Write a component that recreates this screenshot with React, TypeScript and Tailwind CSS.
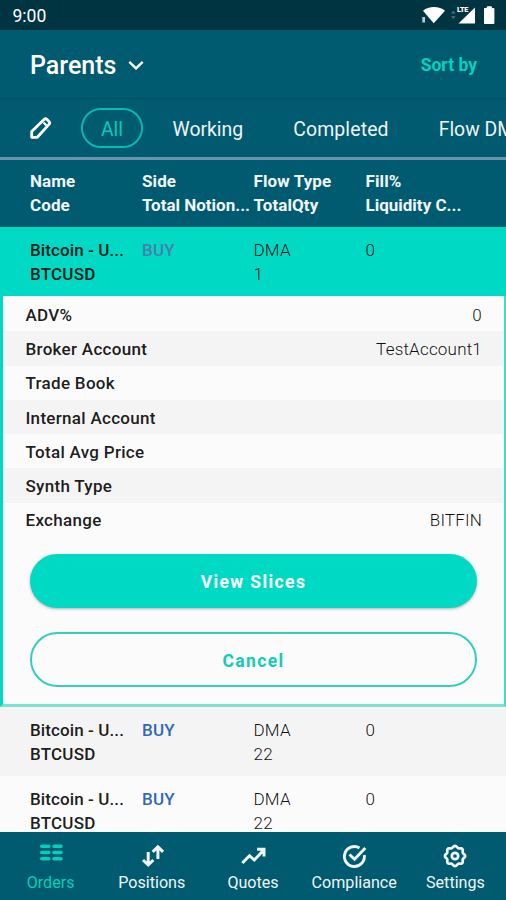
import React from "react";

type Order = { qty: string; tone: string; side: string };

const details: [string, string][] = [
  ["ADV%", "0"],
  ["Broker Account", "TestAccount1"],
  ["Trade Book", ""],
  ["Internal Account", ""],
  ["Total Avg Price", ""],
  ["Synth Type", ""],
  ["Exchange", "BITFIN"],
];

const COLUMNS = "grid grid-cols-[112px_111.5px_112px_112px] pl-[30px]";

// Outline of an eight-lobed cog centred in the 26px icon box.
const cogOutline = Array.from({ length: 96 }, (_, i) => {
  const a = (i / 96) * Math.PI * 2;
  const r = 9.3 + 0.85 * Math.cos(8 * a);
  return `${(13 + r * Math.cos(a)).toFixed(2)},${(13 + r * Math.sin(a)).toFixed(2)}`;
}).join(" ");

function StatusIcons() {
  return (
    <svg width="78" height="20" viewBox="0 0 78 20" fill="#fff">
      <path d="M2 5.8C7.500 .8 18.500 .8 24 5.800L12.700 18.200Z" />
      <path d="M.8 11.500h3.800v6.500H.8z" fill="#b9c8cd" stroke="#003440" strokeWidth="1" />
      <path d="M30 8.500l2.300-2.800 2.300 2.800zM30 11.300l2.300 2.800 2.300-2.800z" fill="#4d7682" />
      <path d="M54 2.500V18.500H37.500Z" />
      <text x="36" y="7.300" fontSize="7.200" fontWeight="900" letterSpacing="-.2" stroke="#003440" strokeWidth="1.2" paintOrder="stroke">LTE</text>
      <path d="M63.500 3.500h2.700V1.800h4.200v1.700h2.500v15h-9.400z" stroke="#fff" strokeLinejoin="round" />
    </svg>
  );
}

function OrderRow({ qty, tone, side }: Order) {
  return (
    <div className={`${COLUMNS} h-[69px] shrink-0 pt-[11px] text-[17px] leading-[24px] ${tone}`}>
      <div className="font-medium text-black/90">
        <div className="tracking-[0.1px]">Bitcoin - U...</div>
        <div className="tracking-[0.2px]">BTCUSD</div>
      </div>
      <div className={`font-medium tracking-[0.2px] ${side}`}>BUY</div>
      <div className="font-light tracking-[0.2px] text-black/95">
        <div>DMA</div>
        <div>{qty}</div>
      </div>
      <div className="font-light text-black/95">0</div>
    </div>
  );
}

function NavItem({ label, active, children }: { label: string; active?: boolean; children: React.ReactNode }) {
  return (
    <div className={`flex flex-1 flex-col items-center pt-[11px] ${active ? "text-[#04cfbb]" : "text-[#f0f6f8]"}`}>
      <svg width="26" height="26" viewBox="0 0 26 26" fill="none" stroke="currentColor" strokeWidth="2.5">
        {children}
      </svg>
      <span className="mt-[3px] text-[16.1px] leading-[22px] whitespace-nowrap">{label}</span>
    </div>
  );
}

export default function App() {
  return (
    <div className="flex h-[900px] w-[506px] flex-col overflow-hidden bg-[#fbfbfb] font-['Roboto',sans-serif]">
      <div className="flex h-[30px] shrink-0 items-center justify-between bg-[#003440] pr-[7px] pl-[12.5px] text-white">
        <span className="pt-[2px] text-[17.5px]">9:00</span>
        <StatusIcons />
      </div>

      <div className="flex h-[68px] shrink-0 items-center justify-between bg-[#005a70] pr-[29px] pl-[30px]">
        <div className="flex items-center gap-[12px] pt-[3px] text-white">
          <span className="text-[25px] leading-[30px] font-medium">Parents</span>
          <svg width="16" height="12" viewBox="0 0 16 12" fill="none" stroke="#fff" strokeWidth="2.3">
            <path d="M1.300 1.800 8 8.300l6.700-6.500" />
          </svg>
        </div>
        <span className="pt-[3px] text-[17.5px] font-bold text-[#04d2be]">Sort by</span>
      </div>

      <div className="flex h-[62px] shrink-0 items-center border-t border-b-[3px] border-t-[#005166] border-b-[#6b91ab] bg-[#005a70] pl-[30px] text-[19.4px] whitespace-nowrap text-[#eef5f8]">
        <svg className="shrink-0" width="22" height="22" viewBox="0 0 22 22" fill="none" stroke="#fff" strokeWidth="2.8" strokeLinejoin="round">
          <path d="M1.700 20.300V14.500L14 2.400q1.500-1.400 3 0l2 2q1.500 1.500 0 3L7.300 20.300Z" />
          <path d="m13.500 5.500 3.200 3.200" strokeWidth="2.200" />
        </svg>
        <div className="ml-[29px] flex h-[40px] w-[62px] shrink-0 items-center justify-center rounded-full border-2 border-[#08b9ad] pt-[3px] text-[#07cbb9]">All</div>
        <span className="ml-[29.5px] pt-[3px]">Working</span>
        <span className="ml-[50px] pt-[3px] tracking-[0.15px]">Completed</span>
        <span className="ml-[50px] pt-[3px]">Flow DM</span>
      </div>

      <div className={`${COLUMNS} h-[67px] shrink-0 bg-[#005a70] pt-[9px] text-[17px] leading-[24px] font-bold tracking-[0.1px] whitespace-nowrap text-[#f0f6f8]`}>
        <div>Name<br />Code</div>
        <div>Side<br /><span className="tracking-[0px]">Total Notion...</span></div>
        <div>Flow Type<br />TotalQty</div>
        <div>Fill%<br /><span className="tracking-[0px]">Liquidity C...</span></div>
      </div>

      <OrderRow qty="1" tone="bg-[#00dac5]" side="text-[#477fae]" />

      <div className="flex h-[411px] shrink-0 flex-col border-r-2 border-b-[3px] border-l-[3px] border-r-[#38dfce] border-b-[#7ce2d1] border-l-[#00dac5] bg-[#fbfbfb] pt-[1px]">
        {details.map(([label, value], i) => (
          <div key={label} className={`flex h-[34.25px] shrink-0 items-center justify-between pt-[3px] pr-[22px] pl-[22.5px] text-[17px] ${i % 2 ? "bg-[#f4f4f4]" : "bg-[#fbfbfb]"}`}>
            <span className="font-medium tracking-[0.3px] text-black/90">{label}</span>
            <span className="font-light tracking-[0.2px] text-black/95">{value}</span>
          </div>
        ))}
        <div className="flex flex-col gap-[24px] pt-[17px] pr-[27px] pl-[27px] text-[17.5px] font-bold tracking-[1.4px]">
          <button className="h-[54px] rounded-full bg-[#00dac5] pt-[2px] text-white shadow-[0_1px_3px_rgba(0,0,0,0.3)]">View Slices</button>
          <button className="h-[55px] rounded-full border-2 border-[#32cfbd] pt-[3px] text-[#13cbb6]">Cancel</button>
        </div>
      </div>

      <div className="flex h-[125px] shrink-0 flex-col overflow-hidden">
        <OrderRow qty="22" tone="bg-[#f4f4f4]" side="text-[#2f68b8]" />
        <OrderRow qty="22" tone="bg-[#fbfbfb]" side="text-[#2f68b8]" />
      </div>

      <div className="flex h-[68px] shrink-0 bg-[#005a70]">
        <NavItem label="Orders" active>
          <path d="M3.800 3.300h7M16 3.300h7M3.800 9.500h7M16 9.500h7M3.800 15.800h7M16 15.800h7" strokeWidth="3.600" strokeLinecap="round" />
        </NavItem>
        <NavItem label="Positions">
          <path d="M9.200 9v12.500M4 17l5.200 5 5.200-5M18.900 16V4M13.700 8.800l5.200-5 5.200 5" strokeWidth="3" />
        </NavItem>
        <NavItem label="Quotes">
          <path d="m2.300 20 7.200-7.300 4.800 4.300L23.500 7.300M17 6.300h7V13.500" strokeWidth="3" />
        </NavItem>
        <NavItem label="Compliance">
          <path d="M18.500 4.900A10 10 0 1 0 23.300 12M8.500 11.500l5 4.800L24.300 5" strokeWidth="2.900" />
        </NavItem>
        <NavItem label="Settings">
          <polygon points={cogOutline} strokeWidth="2.700" strokeLinejoin="round" />
          <circle cx="13" cy="13" r="3.200" strokeWidth="2.700" />
        </NavItem>
      </div>
    </div>
  );
}
